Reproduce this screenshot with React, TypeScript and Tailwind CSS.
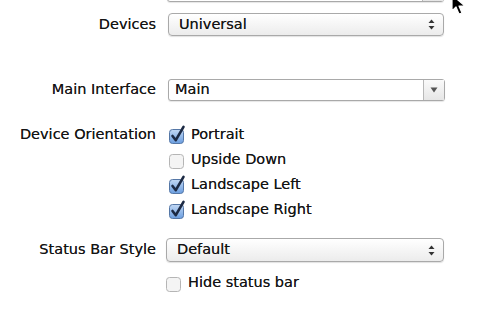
import React from "react";

const font = { fontFamily: '"DejaVu Sans", "Liberation Sans", sans-serif' };

const UpDown = () => (
  <svg width="7" height="11" viewBox="0 0 7 11" className="shrink-0">
    <path d="M3.5 0.5 L6.5 4 L0.5 4 Z" fill="#333" />
    <path d="M3.5 10.5 L6.5 7 L0.5 7 Z" fill="#333" />
  </svg>
);

const Select = ({ value, className = "" }: { value: string; className?: string }) => (
  <div
    className={`flex h-[23px] items-center justify-between rounded-[4px] border border-[#a9a9a9] bg-gradient-to-b from-white to-[#ececec] pl-[10px] pr-[8px] text-[14.5px] text-[#141414] shadow-[0_1px_1px_rgba(0,0,0,0.12)] ${className}`}
  >
    <span>{value}</span>
    <UpDown />
  </div>
);

const Combo = ({ value, className = "" }: { value: string; className?: string }) => (
  <div
    className={`flex h-[22px] items-stretch rounded-[3px] border border-[#a9a9a9] bg-white text-[14.5px] text-[#141414] shadow-[0_1px_1px_rgba(0,0,0,0.1)] ${className}`}
  >
    <span className="flex flex-1 items-center pl-[6px]">{value}</span>
    <span className="flex w-[21px] items-center justify-center border-l border-[#b8b8b8] bg-gradient-to-b from-[#fafafa] to-[#e6e6e6]">
      <svg width="8" height="6" viewBox="0 0 8 6">
        <path d="M0.5 0.5 L7.5 0.5 L4 5.5 Z" fill="#555" />
      </svg>
    </span>
  </div>
);

const Checkbox = ({ checked }: { checked: boolean }) =>
  checked ? (
    <svg width="18" height="18" viewBox="0 0 18 18" className="shrink-0 overflow-visible">
      <defs>
        <linearGradient id="cb" x1="0" y1="0" x2="0" y2="1">
          <stop offset="0" stopColor="#c2d8f4" />
          <stop offset="1" stopColor="#6a9ddf" />
        </linearGradient>
      </defs>
      <rect x="1.5" y="3.5" width="14" height="14" rx="3" fill="url(#cb)" stroke="#5577a6" />
      <path
        d="M4.5 10 L7.8 14.2 L15.5 0.8"
        fill="none"
        stroke="#1c2a44"
        strokeWidth="2.6"
        strokeLinecap="round"
        strokeLinejoin="round"
      />
    </svg>
  ) : (
    <svg width="18" height="18" viewBox="0 0 18 18" className="shrink-0">
      <rect x="1.5" y="3.5" width="14" height="14" rx="3" fill="#f4f4f4" stroke="#b5b5b5" />
    </svg>
  );

const CheckRow = ({ label, checked }: { label: string; checked: boolean }) => (
  <div className="flex h-[25px] items-center gap-[5px] text-[14.5px] text-[#141414]">
    <Checkbox checked={checked} />
    <span>{label}</span>
  </div>
);

const Label = ({ children }: { children: React.ReactNode }) => (
  <div className="w-[157px] shrink-0 pr-[1px] text-right text-[14.5px] text-[#141414]">{children}</div>
);

export default function App() {
  return (
    <div
      className="relative h-[321px] w-[500px] overflow-hidden bg-white [text-shadow:0_0_0.5px_rgba(0,0,0,0.7)]"
      style={font}
    >
      <div className="flex flex-col">
        <div className="ml-[167px] mt-[-20px] w-[277px]">
          <Combo value="" />
        </div>

        <div className="mt-[11px] flex items-center gap-[11px]">
          <Label>Devices</Label>
          <Select value="Universal" className="w-[276px]" />
        </div>

        <div className="mt-[43px] flex items-center gap-[11px]">
          <Label>Main Interface</Label>
          <Combo value="Main" className="w-[277px]" />
        </div>

        <div className="mt-[21px] flex gap-[11px]">
          <div className="flex h-[25px] items-center">
            <Label>Device Orientation</Label>
          </div>
          <div className="flex flex-col">
            <CheckRow label="Portrait" checked />
            <CheckRow label="Upside Down" checked={false} />
            <CheckRow label="Landscape Left" checked />
            <CheckRow label="Landscape Right" checked />
          </div>
        </div>

        <div className="mt-[16px] flex items-center gap-[9px]">
          <Label>Status Bar Style</Label>
          <Select value="Default" className="h-[24px] w-[278px]" />
        </div>

        <div className="ml-[165px] mt-[11px]">
          <div className="flex h-[20px] items-center gap-[5px] text-[14.5px] text-[#141414]">
            <Checkbox checked={false} />
            <span>Hide status bar</span>
          </div>
        </div>
      </div>

      <svg
        width="16"
        height="22"
        viewBox="0 0 16 22"
        className="absolute left-[451px] top-[-6px]"
      >
        <path
          d="M1 1 L1 17 L5 13 L8 20 L11 19 L8 12 L14 12 Z"
          fill="#000"
          stroke="#fff"
          strokeWidth="1.2"
          strokeLinejoin="round"
        />
      </svg>
    </div>
  );
}
